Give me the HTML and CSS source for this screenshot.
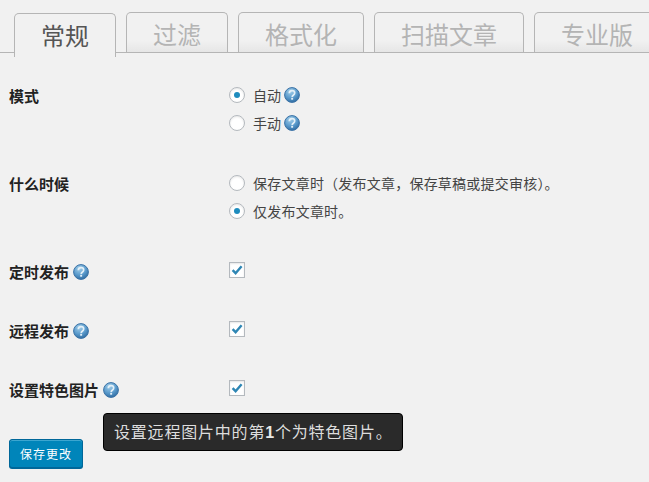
FILE: index.html
```html
<!DOCTYPE html>
<html lang="zh">
<head>
<meta charset="utf-8">
<title>设置</title>
<link rel="stylesheet" href="styles.css">
</head>
<body>
<svg class="defs" width="0" height="0" aria-hidden="true">
  <defs>
    <radialGradient id="helpfill" cx="40%" cy="25%" r="80%">
      <stop offset="0" stop-color="#a4cfe9"/>
      <stop offset="0.55" stop-color="#5c9ccd"/>
      <stop offset="1" stop-color="#2c699f"/>
    </radialGradient>
    <symbol id="help" viewBox="0 0 16 16">
      <circle cx="8" cy="8" r="7.4" fill="url(#helpfill)" stroke="#3a72a6" stroke-width="1"/>
      <path d="M5.3 6.2C5.4 4.6 6.5 3.7 8 3.7c1.6 0 2.7.9 2.7 2.3 0 1.1-.7 1.7-1.4 2.2-.7.5-1.1.9-1.1 1.7" fill="none" stroke="#e4f0f8" stroke-width="1.7"/>
      <rect x="7.2" y="10.8" width="1.9" height="1.9" fill="#e4f0f8"/>
    </symbol>
  </defs>
</svg>
<nav class="tabs">
  <a class="tab active">常规</a>
  <a class="tab">过滤</a>
  <a class="tab">格式化</a>
  <a class="tab">扫描文章</a>
  <a class="tab">专业版</a>
</nav>
<form class="settings">
  <div class="row">
    <div class="label">模式</div>
    <div class="control stack">
      <div class="option"><span class="radio checked"></span><span>自动</span><svg class="help"><use href="#help"/></svg></div>
      <div class="option"><span class="radio"></span><span>手动</span><svg class="help"><use href="#help"/></svg></div>
    </div>
  </div>
  <div class="row">
    <div class="label">什么时候</div>
    <div class="control stack">
      <div class="option"><span class="radio"></span><span class="wide">保存文章时（发布文章，保存草稿或提交审核）。</span></div>
      <div class="option"><span class="radio checked"></span><span class="wide">仅发布文章时。</span></div>
    </div>
  </div>
  <div class="row single">
    <div class="label">定时发布<svg class="help"><use href="#help"/></svg></div>
    <div class="control"><span class="check"><svg viewBox="0 0 14 14"><path d="M2.6 7.2l3 3L11.6 3.2" fill="none" stroke="#2e86b4" stroke-width="2.4"/></svg></span></div>
  </div>
  <div class="row single">
    <div class="label">远程发布<svg class="help"><use href="#help"/></svg></div>
    <div class="control"><span class="check"><svg viewBox="0 0 14 14"><path d="M2.6 7.2l3 3L11.6 3.2" fill="none" stroke="#2e86b4" stroke-width="2.4"/></svg></span></div>
  </div>
  <div class="row single">
    <div class="label">设置特色图片<svg class="help"><use href="#help"/></svg></div>
    <div class="control"><span class="check"><svg viewBox="0 0 14 14"><path d="M2.6 7.2l3 3L11.6 3.2" fill="none" stroke="#2e86b4" stroke-width="2.4"/></svg></span></div>
  </div>
  <div class="tooltip">设置远程图片中的第<b>1</b>个为特色图片。</div>
  <button class="save" type="button">保存更改</button>
</form>
</body>
</html>
```
FILE: styles.css
```css
* { box-sizing: border-box; }
html, body { margin: 0; padding: 0; }
body {
  width: 649px;
  height: 482px;
  overflow: hidden;
  background: #f1f1f1;
  color: #444;
  font-family: "Noto Sans CJK SC", "Liberation Sans", sans-serif;
  font-size: 14px;
  position: relative;
}
.defs { position: absolute; }
.tabs {
  display: flex;
  gap: 10px;
  height: 53px;
  padding: 12px 0 0 14px;
  border-bottom: 1px solid #b5b5b5;
  white-space: nowrap;
}
.tab {
  flex: none;
  height: 40px;
  padding: 0 26px;
  border: 1px solid #b5b5b5;
  border-bottom: 0;
  border-radius: 5px 5px 0 0;
  background: linear-gradient(#f1f1f1 0, #f1f1f1 70%, #e6e6e6 100%);
  color: #b4b4b4;
  font-size: 24px;
  line-height: 42px;
}
.tab.active {
  height: 44px;
  margin-top: 1px;
  background: #f1f1f1;
  color: #555;
  position: relative;
}
.settings {
  position: relative;
  display: flex;
  flex-direction: column;
  gap: 43px;
  padding: 34px 0 0 9px;
}
.row {
  display: grid;
  grid-template-columns: 220px 1fr;
  align-items: start;
}
.row:first-child { margin-bottom: 1px; }
.label {
  display: flex;
  align-items: center;
  gap: 4px;
  height: 16px;
  margin-top: 1px;
  margin-bottom: -1px;
  font-size: 15px;
  font-weight: 700;
  color: #222;
  line-height: 16px;
}
.single .label { margin-top: 2px; margin-bottom: -2px; }
.stack {
  display: flex;
  flex-direction: column;
  gap: 12px;
}
.option {
  display: flex;
  align-items: center;
  height: 16px;
  line-height: 16px;
  color: #444;
}
.wide { letter-spacing: .22px; white-space: nowrap; }
.help { width: 16px; height: 16px; flex: none; margin-left: 3px; }
.label .help { margin-left: 0; }
.radio {
  flex: none;
  width: 16px;
  height: 16px;
  margin-right: 8px;
  border: 1px solid #b4b9be;
  border-radius: 50%;
  background: #fff;
  box-shadow: inset 0 1px 2px rgba(0, 0, 0, .1);
  position: relative;
}
.radio.checked::before {
  content: "";
  position: absolute;
  left: 4px;
  top: 4px;
  width: 6px;
  height: 6px;
  border-radius: 50%;
  background: #1e8cbe;
}
.check {
  display: block;
  width: 16px;
  height: 16px;
  border: 1px solid #b4b9be;
  background: #fff;
  box-shadow: inset 0 1px 2px rgba(0, 0, 0, .1);
}
.check svg { display: block; width: 14px; height: 14px; }
.tooltip {
  position: absolute;
  left: 103px;
  top: 360px;
  width: 300px;
  height: 38px;
  padding-left: 10px;
  background: #2a2a2a;
  border: 1px solid #000;
  border-radius: 4px;
  color: #ddd;
  font-size: 16px;
  line-height: 34px;
  letter-spacing: .8px;
  white-space: nowrap;
}
.tooltip b { font-family: "Liberation Sans", sans-serif; color: #e8e8e8; }
.save {
  align-self: flex-start;
  width: 74px;
  height: 29px;
  padding: 0;
  border: 1px solid #006799;
  border-radius: 3px;
  background: #0085ba;
  box-shadow: inset 0 1px 0 rgba(120, 200, 230, .5), 0 1px 0 #006799;
  color: #fff;
  font-family: "Noto Sans CJK SC", sans-serif;
  font-size: 12px;
  letter-spacing: 1px;
}
```
